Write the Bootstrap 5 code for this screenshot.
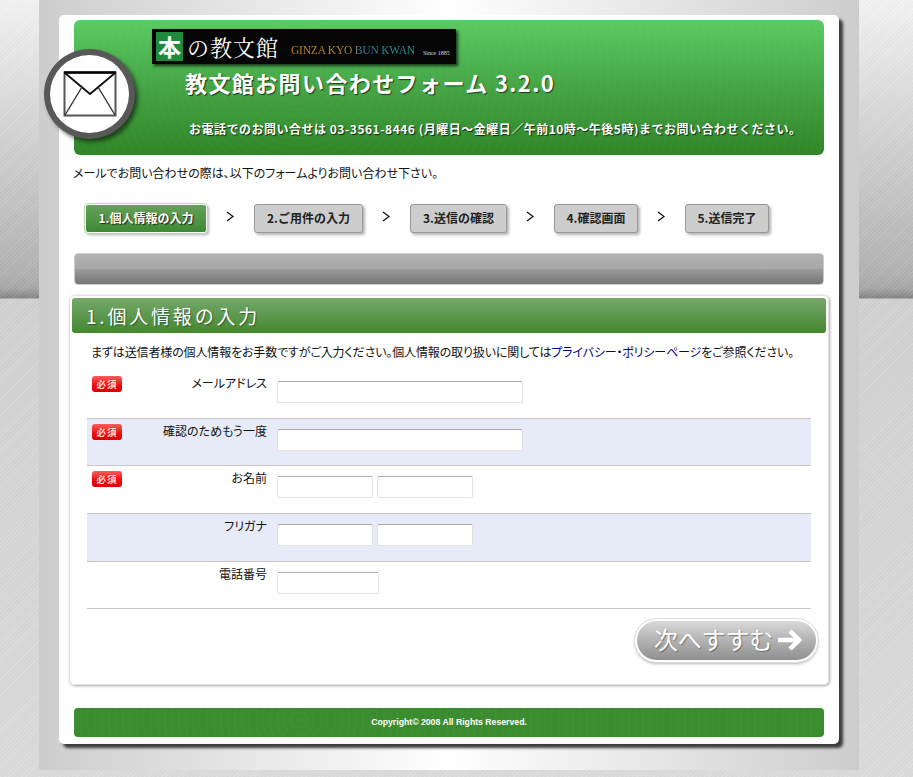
<!DOCTYPE html>
<html lang="ja">
<head>
<meta charset="utf-8">
<title>教文館お問い合わせフォーム</title>
<link rel="stylesheet" href="https://cdn.jsdelivr.net/npm/bootstrap@5.3.0/dist/css/bootstrap.min.css">
<style>
html,body{height:777px;overflow:hidden}
body{font-family:"Noto Sans CJK JP","Liberation Sans",sans-serif;font-size:12px;color:#111;
 background:
 repeating-linear-gradient(135deg,rgba(255,255,255,.07) 0 1px,rgba(0,0,0,.018) 1px 3px),
 linear-gradient(180deg,#f4f4f4 0,#dcdcdc 100px,#b4b4b4 270px,#a8a8a8 288px,#858585 298px,#d2d2d2 299px,#dcdcdc 777px)}
.pagecol{width:820px;height:770px;margin-left:39px;padding:15px 20px 0;background:linear-gradient(90deg,#cdcdcd 0,#fff 50%,#cdcdcd 100%)}
.sheet{position:relative;width:780px;height:729px;background:#fff;border-radius:5px;box-shadow:4px 4px 3px #3c3c3c;padding:5px 15px 0}
.leaf{background-color:#3a8c2f;background-image:repeating-radial-gradient(circle at 30% 40%,rgba(255,255,255,.02) 0 2px,transparent 2px 7px)}
.masthead{height:135px;border-radius:6px;background-image:repeating-radial-gradient(circle at 30% 40%,rgba(255,255,255,.015) 0 2px,transparent 2px 7px),linear-gradient(180deg,#5acb62 0,#47a848 45%,#2f8527 100%)}
.logobar{width:304px;height:35px;margin:9px 0 0 78px;background:#050505;box-shadow:2px 2px 3px rgba(0,0,0,.7);color:#fff;font-family:"Noto Serif CJK JP","Liberation Serif","Noto Sans CJK JP",serif;padding-left:4px}
.logomark{width:27px;height:29px;background:#1f8a3c;color:#fff;font-size:23px;line-height:29px;font-weight:700;text-align:center;font-family:"Noto Sans CJK JP",sans-serif;margin-right:4px}
.logoname{font-size:22px;letter-spacing:1px;line-height:1;margin-right:12px}
.logoen{font-size:11.500px;letter-spacing:-.2px;margin-top:9px;white-space:nowrap;background:linear-gradient(90deg,#c98a23 0,#b58a30 45%,#2a7fa8 60%,#2e9a90 100%);-webkit-background-clip:text;background-clip:text;color:transparent;font-family:"Liberation Serif",serif}
.logosince{font-size:6px;margin:14px 0 0 8px;white-space:nowrap;font-family:"Liberation Serif",serif;color:#ddd}
.masttitle{margin:4px 0 0 111px;font-size:22px;line-height:28px;font-weight:700;letter-spacing:1.400px;color:#fff;text-shadow:1px 1px 1px rgba(0,0,0,.65);white-space:nowrap}
.masttel{margin:25px 0 0 115px;font-size:12px;line-height:16px;font-weight:700;letter-spacing:.5px;color:#fff;text-shadow:1px 1px 1px rgba(0,0,0,.7);white-space:nowrap}
.mailbadge{position:absolute;left:-15px;top:34px;width:91px;height:90px;border-radius:50%;background:#fff;border:6px solid #585858;box-shadow:3px 3px 4px rgba(0,0,0,.55)}
.leadtext{margin:10px 0 0 -1px;line-height:16px;font-size:12px;font-feature-settings:"palt"}
.stepline{margin:23px 0 0 11px;height:29px}
.stepbox{height:29px;border:1px solid #999;border-radius:3px;background:#cdcdcd;box-shadow:2px 2px 3px rgba(0,0,0,.3);font-weight:700;font-size:12px;line-height:26px;text-align:center;color:#222;white-space:nowrap}
.stepbox.now{background:linear-gradient(180deg,#66a05a,#3d8a35);border:1px solid #fff;outline:1px solid #b8d8b0;color:#fff;text-shadow:1px 1px 1px #222}
.sw1{width:122px}.sw2{width:109px}.sw3{width:97px}.sw4{width:84px}.sw5{width:84px}
.stepsep{width:47px;display:flex;align-items:center;justify-content:center;padding:0 2px 4px 0}
.graystrip{height:32px;margin-top:20px;border-radius:4px;background:linear-gradient(180deg,#b2b2b2 0,#a8a8a8 50%,#9a9a9a 52%,#767676 100%);border:1px solid #ccc}
.formpanel{width:760px;height:390px;margin:10px 0 0 -5px;border:1px solid #e2e2e2;border-radius:5px;box-shadow:1px 1px 3px rgba(0,0,0,.35);padding:2px;position:relative}
.panelhead{height:35px;border-radius:3px;background:linear-gradient(180deg,#75a868 0,#5f9a52 45%,#44882f 100%);color:#fff;font-size:19px;line-height:35px;padding-left:14px;letter-spacing:2.800px;text-shadow:1px 1px 1px rgba(0,0,0,.4)}
.panelnote{margin:11px 0 0 19px;line-height:16px;font-size:12px;letter-spacing:-.14px;font-feature-settings:"palt";white-space:nowrap}
.panelnote a{color:#00008b;text-decoration:none}
.rowset{margin:11px 0 0 15px;width:724px}
.frow{height:48px;border-bottom:1px solid #c8c8c8;position:relative}
.frow.slim{height:47px}
.frow.shade{background:#e6ebf7}
.tagcell{width:35px;padding:5px 0 0 5px;flex:none}
.reqtag{display:block;width:30px;height:16px;border-radius:3px;background:linear-gradient(180deg,#ff5d5d 0,#ee1111 55%,#d80000 100%);color:#ffd9d9;font-size:9.500px;line-height:16px;font-weight:700;text-align:center;letter-spacing:1px}
.namecell{width:145px;flex:none;text-align:right;padding-top:3px;line-height:18px;font-size:12px;font-feature-settings:"palt"}
.fieldcell{padding:10px 0 0 10px;gap:4px}
.fieldcell .form-control{height:22px;padding:0 4px;font-size:12px;border-radius:2px;border:1px solid #e2e2e2;border-top-color:#aaa;box-shadow:none}
.wlong{width:246px!important}.wname{width:96px!important}.wtel{width:102px!important}
.nextbtn{position:absolute;left:565px;top:323px;width:183px;height:43px;border-radius:22px;border:2px solid #fff;outline:1px solid #ddd;background:linear-gradient(180deg,#d9d9d9 0,#b6b6b6 45%,#8f8f8f 100%);color:#fff;font-size:24px;font-weight:400;line-height:32px;box-shadow:0 2px 3px rgba(0,0,0,.3);padding:0 0 4px 17px;text-align:left;white-space:nowrap;text-shadow:1px 1px 1px rgba(0,0,0,.35);letter-spacing:-.2px}
.nextbtn svg{vertical-align:-3px;margin-left:3px}
.sitefoot{height:29px;margin-top:23px;border-radius:4px;color:#fff;font-size:8.700px;font-weight:700;font-family:"Liberation Sans",sans-serif;line-height:29px;text-align:center}
</style>
</head>
<body>
<div class="pagecol">
<div class="sheet">
  <header class="masthead d-flex flex-column">
    <div class="logobar d-flex align-items-center">
      <span class="logomark">本</span><span class="logoname">の教文館</span><span class="logoen">GINZA KYO BUN KWAN</span><span class="logosince">Since 1885</span>
    </div>
    <div class="masttitle">教文館お問い合わせフォーム 3.2.0</div>
    <div class="masttel">お電話でのお問い合せは 03-3561-8446 (月曜日～金曜日／午前10時～午後5時)までお問い合わせください。</div>
  </header>
  <div class="mailbadge d-flex align-items-center justify-content-center">
    <svg width="54" height="46" viewBox="0 0 54 46" fill="none"><rect x="1.500" y="1.500" width="51" height="43" fill="#fff" stroke="#555" stroke-width="2"/><path d="M1 1.500H53" stroke="#000" stroke-width="2.500"/><path d="M2 2 27 23 52 2" stroke="#111" stroke-width="1.800"/><path d="M2 44 19 16M52 44 35 16" stroke="#333" stroke-width="1.400"/></svg>
  </div>
  <p class="leadtext">メールでお問い合わせの際は、以下のフォームよりお問い合わせ下さい。</p>
  <nav class="stepline d-flex">
    <div class="stepbox now sw1">1.個人情報の入力</div>
    <div class="stepsep"><svg width="8" height="11" viewBox="0 0 8 11" fill="none"><path d="M1 1 7 5.500 1 10" stroke="#111" stroke-width="1.300"/></svg></div>
    <div class="stepbox sw2">2.ご用件の入力</div>
    <div class="stepsep"><svg width="8" height="11" viewBox="0 0 8 11" fill="none"><path d="M1 1 7 5.500 1 10" stroke="#111" stroke-width="1.300"/></svg></div>
    <div class="stepbox sw3">3.送信の確認</div>
    <div class="stepsep"><svg width="8" height="11" viewBox="0 0 8 11" fill="none"><path d="M1 1 7 5.500 1 10" stroke="#111" stroke-width="1.300"/></svg></div>
    <div class="stepbox sw4">4.確認画面</div>
    <div class="stepsep"><svg width="8" height="11" viewBox="0 0 8 11" fill="none"><path d="M1 1 7 5.500 1 10" stroke="#111" stroke-width="1.300"/></svg></div>
    <div class="stepbox sw5">5.送信完了</div>
  </nav>
  <div class="graystrip"></div>
  <section class="formpanel">
    <h2 class="panelhead m-0 fw-normal">1.個人情報の入力</h2>
    <p class="panelnote mb-0">まずは送信者様の個人情報をお手数ですがご入力ください。個人情報の取り扱いに関しては<a href="#">プライバシー・ポリシーページ</a>をご参照ください。</p>
    <div class="rowset">
      <div class="frow d-flex">
        <div class="tagcell"><span class="reqtag">必須</span></div>
        <div class="namecell">メールアドレス</div>
        <div class="fieldcell d-flex"><input class="form-control wlong" type="text"></div>
      </div>
      <div class="frow slim shade d-flex">
        <div class="tagcell"><span class="reqtag">必須</span></div>
        <div class="namecell">確認のためもう一度</div>
        <div class="fieldcell d-flex"><input class="form-control wlong" type="text"></div>
      </div>
      <div class="frow d-flex">
        <div class="tagcell"><span class="reqtag">必須</span></div>
        <div class="namecell">お名前</div>
        <div class="fieldcell d-flex"><input class="form-control wname" type="text"><input class="form-control wname" type="text"></div>
      </div>
      <div class="frow shade d-flex">
        <div class="tagcell"></div>
        <div class="namecell">フリガナ</div>
        <div class="fieldcell d-flex"><input class="form-control wname" type="text"><input class="form-control wname" type="text"></div>
      </div>
      <div class="frow slim d-flex">
        <div class="tagcell"></div>
        <div class="namecell">電話番号</div>
        <div class="fieldcell d-flex"><input class="form-control wtel" type="text"></div>
      </div>
    </div>
    <button class="nextbtn" type="button">次へすすむ<svg width="26" height="24" viewBox="0 0 26 24" fill="none"><path d="M2 12H23M14 3l9 9-9 9" stroke="#fff" stroke-width="4.500"/></svg></button>
  </section>
  <footer class="sitefoot leaf">Copyright© 2008 All Rights Reserved.</footer>
</div>
</div>
</body>
</html>
